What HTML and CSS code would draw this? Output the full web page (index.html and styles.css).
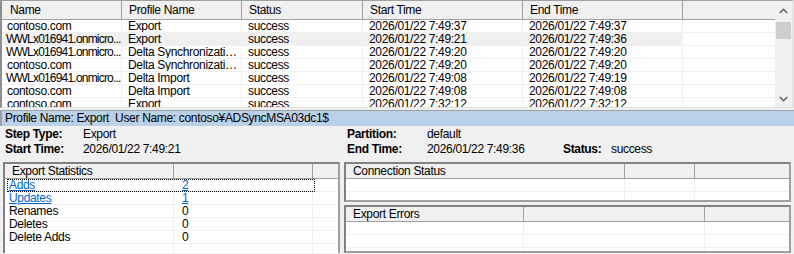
FILE: index.html
```html
<!DOCTYPE html>
<html lang="en">
<head>
	<meta charset="UTF-8">
	<title>Synchronization Service Manager - Operations</title>
	<link rel="stylesheet" href="styles.css">
</head>
<body>
<div class="list">
	<div class="list-view">
		<table class="grid runs">
			<colgroup>
				<col class="w-name"><col class="w-profile"><col class="w-status"><col class="w-start"><col class="w-end"><col>
			</colgroup>
			<thead>
				<tr><th>Name</th><th>Profile Name</th><th>Status</th><th>Start Time</th><th>End Time</th><th></th></tr>
			</thead>
			<tbody>
				<tr><td>contoso.com</td><td>Export</td><td>success</td><td>2026/01/22 7:49:37</td><td>2026/01/22 7:49:37</td><td></td></tr>
				<tr class="sel"><td class="cut">WWLx016941.onmicro...</td><td>Export</td><td>success</td><td>2026/01/22 7:49:21</td><td>2026/01/22 7:49:36</td><td></td></tr>
				<tr><td class="cut">WWLx016941.onmicro...</td><td>Delta Synchronizati…</td><td>success</td><td>2026/01/22 7:49:20</td><td>2026/01/22 7:49:20</td><td></td></tr>
				<tr><td>contoso.com</td><td>Delta Synchronizati…</td><td>success</td><td>2026/01/22 7:49:20</td><td>2026/01/22 7:49:20</td><td></td></tr>
				<tr><td class="cut">WWLx016941.onmicro...</td><td>Delta Import</td><td>success</td><td>2026/01/22 7:49:08</td><td>2026/01/22 7:49:19</td><td></td></tr>
				<tr><td>contoso.com</td><td>Delta Import</td><td>success</td><td>2026/01/22 7:49:08</td><td>2026/01/22 7:49:08</td><td></td></tr>
				<tr><td>contoso.com</td><td>Export</td><td>success</td><td>2026/01/22 7:32:12</td><td>2026/01/22 7:32:12</td><td></td></tr>
			</tbody>
		</table>
	</div>
	<div class="vscroll">
		<span class="sb-btn sb-up"><svg width="9" height="6" viewBox="0 0 9 6"><polyline points="0.8,5 4.5,1.3 8.2,5" fill="none" stroke="#606060" stroke-width="1.6"/></svg></span>
		<span class="sb-thumb"></span>
		<span class="sb-track"></span>
		<span class="sb-btn sb-down"><svg width="9" height="6" viewBox="0 0 9 6"><polyline points="0.8,1 4.5,4.7 8.2,1" fill="none" stroke="#606060" stroke-width="1.6"/></svg></span>
	</div>
</div>
<div class="splitter"></div>
<div class="caption">Profile Name: Export&nbsp; User Name: contoso¥ADSyncMSA03dc1$</div>
<div class="details">
	<b>Step Type:</b><span>Export</span><b>Partition:</b><span>default</span><span></span><span></span>
	<b>Start Time:</b><span>2026/01/22 7:49:21</span><b>End Time:</b><span>2026/01/22 7:49:36</span><b>Status:</b><span>success</span>
</div>
<div class="panels">
	<div class="panel stats">
		<table class="grid">
			<colgroup><col class="w-stat"><col class="w-count"><col></colgroup>
			<thead><tr><th>Export Statistics</th><th></th><th></th></tr></thead>
			<tbody>
				<tr class="focus"><td><a href="#">Adds</a></td><td><a href="#">2</a></td><td></td></tr>
				<tr><td><a href="#">Updates</a></td><td><a href="#">1</a></td><td></td></tr>
				<tr><td>Renames</td><td>0</td><td></td></tr>
				<tr><td>Deletes</td><td>0</td><td></td></tr>
				<tr><td>Delete Adds</td><td>0</td><td></td></tr>
				<tr><td></td><td></td><td></td></tr>
			</tbody>
		</table>
	</div>
	<div class="side">
		<div class="panel conn">
			<table class="grid">
				<colgroup><col class="w-conn"><col class="w-conn2"><col></colgroup>
				<thead><tr><th>Connection Status</th><th></th><th></th></tr></thead>
				<tbody>
					<tr><td></td><td></td><td></td></tr>
					<tr><td></td><td></td><td></td></tr>
				</tbody>
			</table>
		</div>
		<div class="panel errors">
			<table class="grid">
				<colgroup><col class="w-err"><col class="w-err2"><col></colgroup>
				<thead><tr><th>Export Errors</th><th></th><th></th></tr></thead>
				<tbody>
					<tr><td></td><td></td><td></td></tr>
					<tr><td></td><td></td><td></td></tr>
					<tr><td></td><td></td><td></td></tr>
					<tr><td></td><td></td><td></td></tr>
				</tbody>
			</table>
		</div>
	</div>
</div>
</body>
</html>
```
FILE: styles.css
```css
html,body{margin:0;padding:0;}
body{width:794px;height:254px;overflow:hidden;background:#f0f0f0;color:#000;font:12px/13px "Liberation Sans",Arial,sans-serif;letter-spacing:-0.33px;}
a{color:#0066cc;text-decoration:underline;}

/* list views */
.grid{border-collapse:separate;border-spacing:0;table-layout:fixed;width:100%;}
.grid th{padding:0 0 0 7px;text-align:left;font-weight:normal;line-height:18px;background:#f0f0f0;border-right:1px solid #a0a0a0;border-bottom:1px solid #a0a0a0;white-space:nowrap;overflow:hidden;}
.grid th:last-child{border-right:0;}
.grid td{padding:0 0 0 6px;line-height:12px;height:12px;border-right:1px solid #f0f0f0;border-bottom:1px solid #f0f0f0;white-space:nowrap;overflow:hidden;}
.grid td:last-child{border-right:0;}

/* run history */
.list{display:flex;height:108px;box-sizing:border-box;background:#fff;border-top:1px solid #a0a0a0;border-left:2px solid #8f8f8f;border-right:2px solid #e3e3e3;border-bottom:1px solid #e3e3e3;}
.list-view{flex:1;overflow:hidden;}
.runs th:first-child{padding-left:8px;}
.runs td:first-child{padding-left:5px;}
.runs td.cut{padding-left:4px;letter-spacing:-0.8px;}
.runs tr.sel td{background:#f0f0f0;}
.runs tr.sel td:last-child{background:#fff;}
.w-name{width:120px;}
.w-profile{width:120px;}
.w-status{width:121px;}
.w-start{width:160px;}
.w-end{width:160px;}

.vscroll{width:17px;display:flex;flex-direction:column;align-items:center;background:#f0f0f0;}
.sb-btn{display:flex;align-items:center;justify-content:center;width:17px;height:20px;}
.sb-down{height:17px;}
.sb-thumb{width:15px;height:17px;margin-top:1px;background:#cdcdcd;}
.sb-track{flex:1;}

/* selected run */
.splitter{height:2px;border-bottom:1px solid #a0a0a0;}
.caption{height:15px;line-height:15px;padding-left:3px;background:#bad1ea;border-left:2px solid #a0a0a0;white-space:pre;}
.details{display:grid;grid-template-columns:78px 264px 80px 136px 48px 1fr;grid-auto-rows:15px;line-height:15px;padding:1px 0 0 5px;}
.details b{font-weight:bold;}

/* statistics panels */
.panels{display:flex;gap:4px;height:91px;margin-top:5px;padding:0 3px;overflow:hidden;}
.panel{box-sizing:border-box;background:#fff;border:2px solid #a0a0a0;border-top-color:#828282;border-left-color:#828282;overflow:hidden;}
.panel .grid th{line-height:14px;}
.panel .grid td{line-height:12px;}
.stats{width:337px;height:100px;}
.stats th{padding-left:7px;}
.stats td{padding-left:4px;overflow:visible;}
.stats td:nth-child(2){padding-left:8px;}
.stats tr.focus td:first-child{position:relative;}
.stats tr.focus td:first-child::after{content:"";position:absolute;left:2px;top:0;width:308px;height:13px;box-sizing:border-box;border:1px dotted #000;}
.w-stat{width:169px;}
.w-count{width:139px;}

.side{flex:1;display:flex;flex-direction:column;gap:3px;}
.conn{height:40px;}
.errors{flex:1;height:60px;}
.w-conn{width:279px;}
.w-conn2{width:70px;}
.w-err{width:178px;}
.w-err2{width:181px;}
```
